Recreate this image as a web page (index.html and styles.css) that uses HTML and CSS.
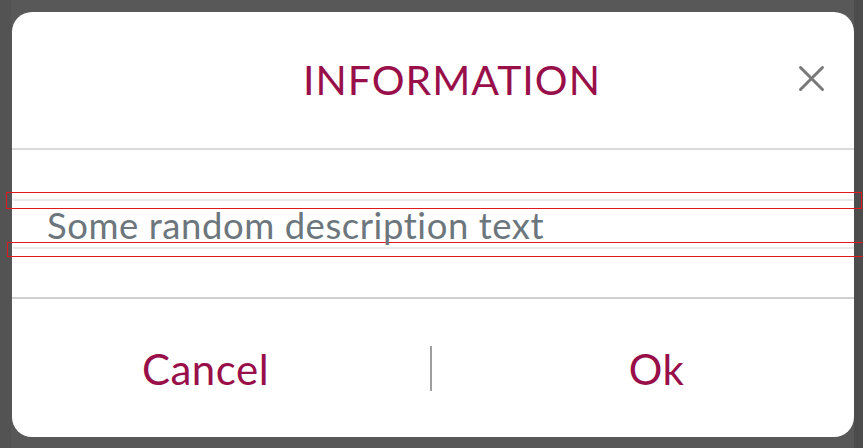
FILE: index.html
```html
<!DOCTYPE html>
<html lang="en">
<head>
  <meta charset="UTF-8">
  <meta name="viewport" content="width=device-width, initial-scale=1.0">
  <title>Information dialog</title>
  <link rel="stylesheet" href="styles.css">
</head>
<body>
  <div class="dialog">
    <div class="dialog-header">
      <div class="dialog-title">INFORMATION</div>
      <button class="close-btn" aria-label="Close">
        <svg width="27" height="27" viewBox="0 0 27 27">
          <path d="M2.5 2.5 L24.5 24.5 M24.5 2.5 L2.5 24.5" stroke="#787878" stroke-width="3" stroke-linecap="round" fill="none"/>
        </svg>
      </button>
    </div>

    <div class="dialog-body">
      <div class="rule rule-top"><div class="rule-line"></div></div>
      <div class="description">Some random description text</div>
      <div class="rule rule-bottom"><div class="rule-line"></div></div>
    </div>

    <div class="dialog-footer">
      <button class="action">Cancel</button>
      <div class="divider"></div>
      <button class="action">Ok</button>
    </div>
  </div>
</body>
</html>
```

FILE: styles.css
```css
* {
  box-sizing: border-box;
}

html, body {
  margin: 0;
  padding: 0;
  height: 448px;
  overflow: hidden;
}

body {
  padding: 12px 9px 11px 12px;
  background: linear-gradient(to right, #535353 0 11px, #585858 11px 854px, #4c4c4c 854px);
  font-family: Lato, "Liberation Sans", sans-serif;
}

.dialog {
  width: 842px;
  height: 425px;
  background: #fff;
  border-radius: 20px;
  display: flex;
  flex-direction: column;
}

.dialog-header {
  height: 138px;
  flex: none;
  display: flex;
  align-items: center;
  padding: 0 29px 2px 94px;
  border-bottom: 2px solid #dadada;
}

.dialog-title {
  flex: 1;
  text-align: center;
  font-size: 41px;
  letter-spacing: 1px;
  color: #990f49;
}

.close-btn {
  width: 27px;
  height: 27px;
  padding: 0;
  border: none;
  background: transparent;
  display: flex;
  margin-top: -2px;
}

.dialog-body {
  height: 149px;
  flex: none;
  padding-top: 42px;
  border-bottom: 2px solid #d0d0d0;
}

.rule {
  border: 1px solid #e0191f;
}

.rule-top {
  height: 17px;
  margin: 0 -8px 0 -6px;
  padding: 6px 8px 0 6px;
}

.rule-bottom {
  height: 15px;
  margin: 0 -30px 0 -5px;
  border-right: none;
  padding: 4px 30px 0 5px;
}

.rule-line {
  height: 2px;
  background: #e9e9e9;
}

.description {
  height: 33px;
  line-height: 33px;
  padding-left: 35px;
  font-size: 36.5px;
  letter-spacing: 0.55px;
  color: #6c767c;
}

.dialog-footer {
  flex: 1;
  display: grid;
  grid-template-columns: 1fr 2px 1fr;
  column-gap: 31px;
  align-items: center;
  padding-right: 4px;
}

.action {
  border: none;
  background: transparent;
  padding: 2px 0 0 0;
  font-family: Lato, "Liberation Sans", sans-serif;
  font-size: 42px;
  letter-spacing: 0.5px;
  color: #990f49;
  text-align: center;
}

.divider {
  width: 2px;
  height: 45px;
  background: #9e9e9e;
}
```
